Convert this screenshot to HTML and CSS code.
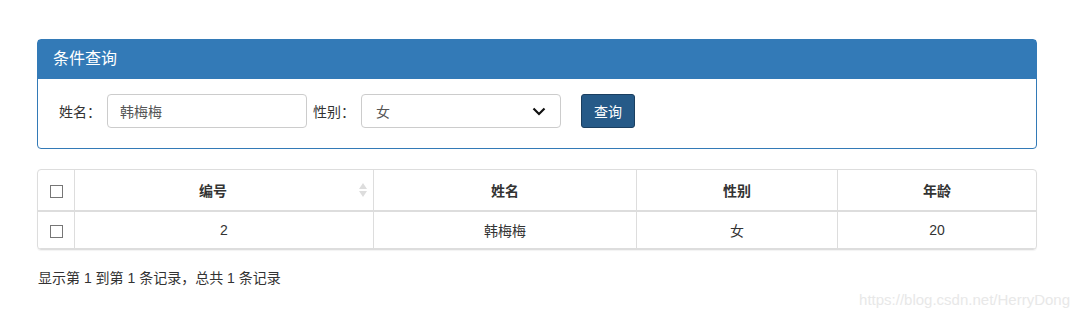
FILE: index.html
```html
<!DOCTYPE html>
<html lang="zh-CN">
<head>
    <meta charset="UTF-8">
    <title>条件查询</title>
    <link rel="stylesheet" href="styles.css">
</head>
<body>
    <div class="wrap">
        <div class="panel">
            <div class="panel-heading">条件查询</div>
            <div class="panel-body">
                <label class="label">姓名：</label>
                <input type="text" class="field" value="韩梅梅">
                <label class="label">性别：</label>
                <div class="select">
                    <span>女</span>
                    <svg width="14" height="9" viewBox="0 0 14 9"><path d="M1.5 1.5 L7 7 L12.5 1.5" fill="none" stroke="#111" stroke-width="2.2"/></svg>
                </div>
                <button class="btn">查询</button>
            </div>
        </div>

        <div class="table-box">
            <table class="grid">
                <thead>
                    <tr>
                        <th class="check"><span class="box"></span></th>
                        <th class="col-id">编号<svg class="sort" width="8" height="14" viewBox="0 0 8 14"><path d="M4 0 L8 6 L0 6 Z M0 8 L8 8 L4 14 Z" fill="#ddd"/></svg></th>
                        <th class="col-name">姓名</th>
                        <th class="col-sex">性别</th>
                        <th>年龄</th>
                    </tr>
                </thead>
                <tbody>
                    <tr>
                        <td class="check"><span class="box"></span></td>
                        <td>2</td>
                        <td>韩梅梅</td>
                        <td>女</td>
                        <td>20</td>
                    </tr>
                </tbody>
            </table>
        </div>

        <p class="info">显示第 1 到第 1 条记录，总共 1 条记录</p>
    </div>

    <div class="mark">https://blog.csdn.net/HerryDong</div>
</body>
</html>
```

FILE: styles.css
```css
body {
    margin: 0;
    font-family: "Liberation Sans", "Noto Sans CJK SC", sans-serif;
    font-size: 14px;
    color: #333;
    background: #fff;
}

.wrap {
    width: 1000px;
    padding: 39px 0 0 37px;
}

.panel {
    border: 1px solid #337ab7;
    border-radius: 4px;
}

.panel-heading {
    background: #337ab7;
    color: #fff;
    font-size: 16px;
    line-height: 20px;
    padding: 9px 15px 10px;
}

.panel-body {
    display: flex;
    align-items: center;
    padding: 15px 20px 20px 21px;
}

.label {
    margin-right: 6px;
}

.field {
    box-sizing: border-box;
    width: 200px;
    height: 34px;
    padding: 0 12px;
    border: 1px solid #ccc;
    border-radius: 4px;
    font: inherit;
    color: #555;
    margin-right: 6px;
}

.select {
    box-sizing: border-box;
    width: 200px;
    height: 34px;
    padding: 0 14px 0 14px;
    border: 1px solid #ccc;
    border-radius: 4px;
    color: #555;
    display: flex;
    align-items: center;
    justify-content: space-between;
    margin-right: 20px;
}

.btn {
    box-sizing: border-box;
    height: 34px;
    width: 54px;
    padding: 0;
    border: 1px solid #1b3f60;
    border-radius: 3px;
    background: #265a88;
    color: #fff;
    font: inherit;
}

.table-box {
    margin-top: 20px;
    border: 1px solid #ddd;
    border-radius: 4px;
    overflow: hidden;
    box-shadow: 0 1px 1px rgba(0, 0, 0, 0.05);
}

.grid {
    width: 100%;
    border-collapse: collapse;
}

.grid th,
.grid td {
    text-align: center;
    border-left: 1px solid #ddd;
    padding: 0;
}

.grid th:first-child,
.grid td:first-child {
    border-left: none;
}

.grid th {
    height: 40px;
    font-weight: bold;
    font-size: 14px;
    border-bottom: 2px solid #ddd;
    position: relative;
}

.grid td {
    height: 36px;
    border-bottom: 1px solid #ddd;
}

.check {
    width: 36px;
}

.grid th.col-id {
    width: 276px;
    padding-right: 22px;
}

.col-name {
    width: 262px;
}

.col-sex {
    width: 200px;
}

.box {
    display: inline-block;
    width: 11px;
    height: 11px;
    border: 1px solid #767676;
    vertical-align: middle;
}

.sort {
    position: absolute;
    right: 6px;
    top: 13px;
}

.info {
    margin: 19px 0 0 1px;
    line-height: 18px;
}

.mark {
    position: absolute;
    right: 9px;
    top: 291px;
    font-size: 15px;
    color: #e8e8e8;
}
```
